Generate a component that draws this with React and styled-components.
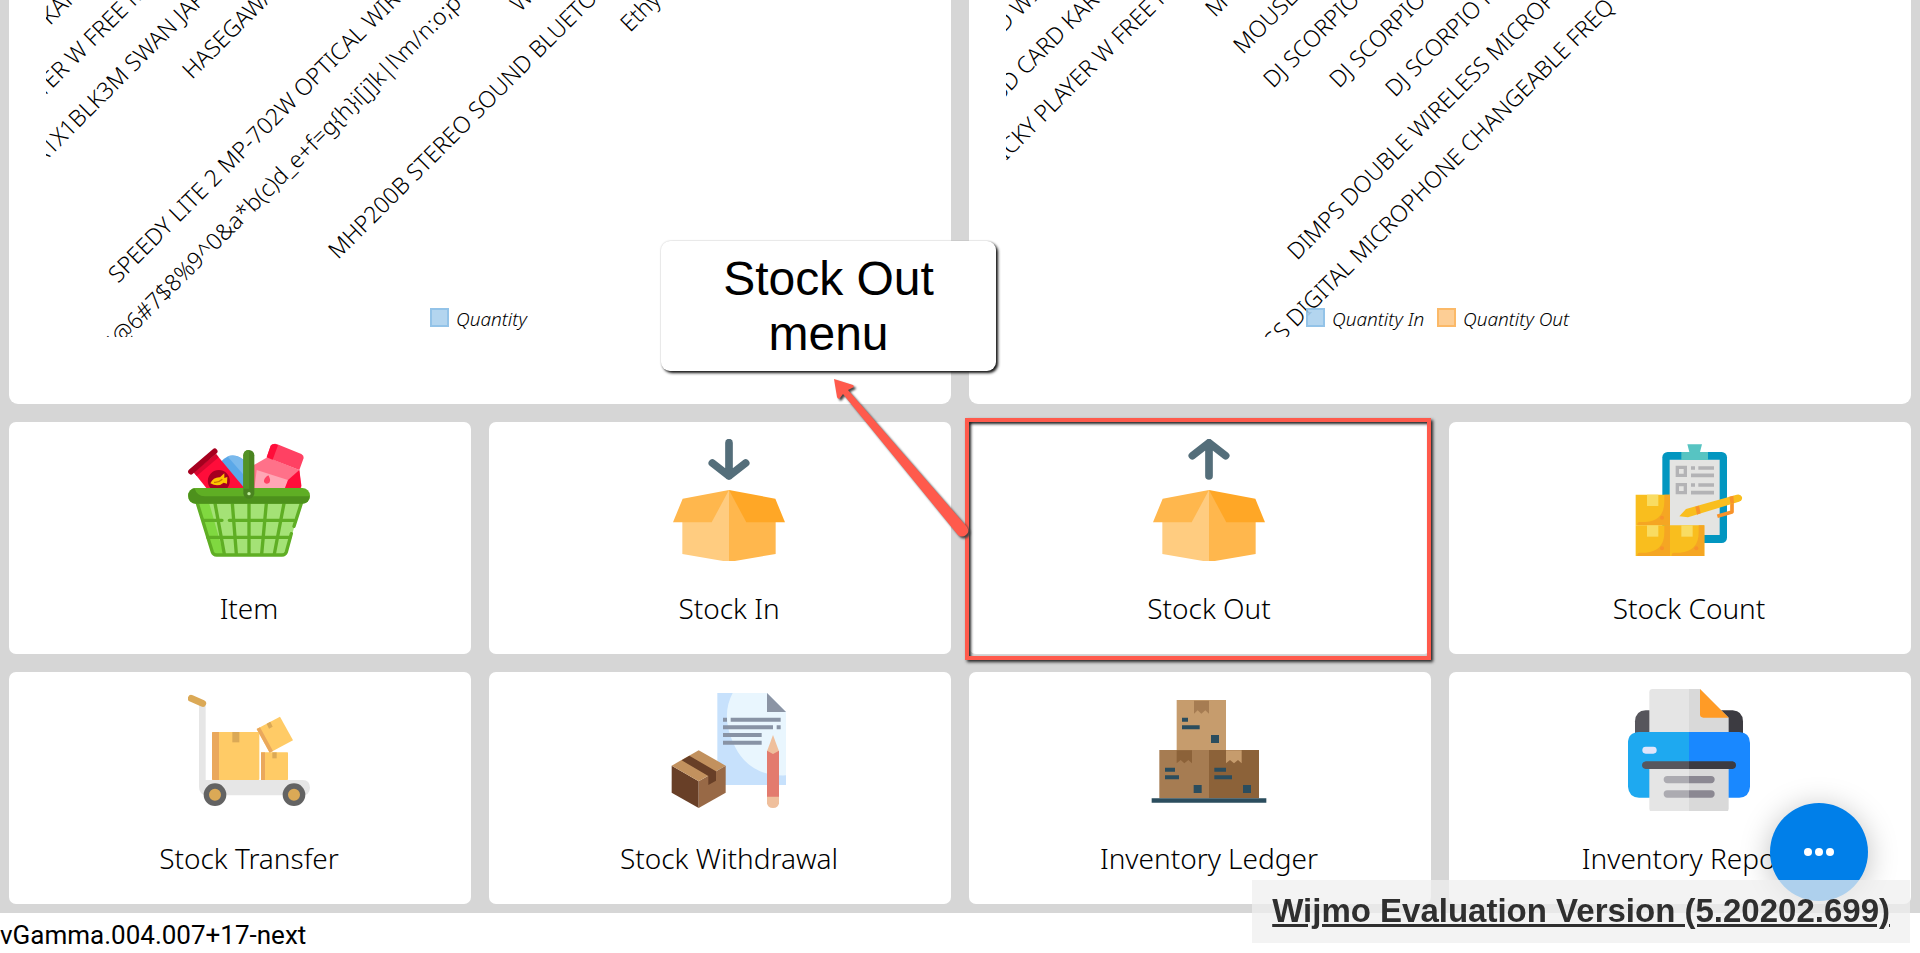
import React from "react";
import styled, { createGlobalStyle } from "styled-components";

const GlobalStyle = createGlobalStyle`
  * {
    box-sizing: border-box;
  }

  body {
    margin: 0;
    background: #fff;
    color: #000;
    font-family: "Noto Sans", "Open Sans", sans-serif;
    overflow: hidden;
  }
`;

const Dashboard = styled.main`
  display: flex;
  flex-direction: column;
  gap: 18px;
  padding: 0 9px 9px;
  background: #d6d6d6;
`;

const Charts = styled.div`
  display: grid;
  grid-template-columns: repeat(2, 1fr);
  gap: 18px;
`;

const ChartCard = styled.section`
  padding: 0 18px 67px 37px;
  background: #fff;
  border-radius: 0 0 9px 9px;
`;

const ChartSvg = styled.svg`
  display: block;
  width: 100%;
  height: 337px;
  overflow: hidden;
`;

const AxisLabel = styled.text`
  font-size: 23px;
  font-weight: 350;
`;

const LegendLabel = styled.text`
  font-size: 19px;
  font-style: italic;
  font-weight: 350;
`;

const Tiles = styled.nav`
  display: grid;
  grid-template-columns: repeat(4, 1fr);
  gap: 18px;
`;

const TileBox = styled.div`
  position: relative;
`;

const Tile = styled.a`
  display: flex;
  flex-direction: column;
  align-items: center;
  gap: 27px;
  padding: 17px 0 26px 18px;
  background: #fff;
  border-radius: 7px;
  color: #000;
  text-decoration: none;
`;

const TileIcon = styled.svg`
  width: 122px;
  height: 122px;
`;

const TileLabel = styled.span`
  font-size: 28px;
  font-weight: 350;
  line-height: 40px;
`;

const Highlight = styled.div`
  position: absolute;
  z-index: 2;
  inset: -4px 0 -6px -4px;
  border: 4px solid #ff5a4c;
  box-shadow: 2px 2px 3px #222, inset 2px 2px 3px #222;
  pointer-events: none;
`;

const Callout = styled.div`
  position: absolute;
  z-index: 2;
  left: -308px;
  bottom: 283px;
  width: 335px;
  padding: 10px 40px;
  background: #fff;
  border-radius: 9px;
  box-shadow: 2px 2px 3px #111, 0 0 2px #ccc;
  font-family: "Liberation Sans", Arial, sans-serif;
  font-size: 48px;
  line-height: 55px;
  text-align: center;
`;

const Arrow = styled.svg`
  position: absolute;
  z-index: 3;
  left: -144px;
  top: -48px;
  width: 150px;
  height: 170px;
  filter: drop-shadow(2px 2px 1px #444);
  pointer-events: none;
`;

const Version = styled.footer`
  padding-top: 4px;
  font-family: Roboto, sans-serif;
  font-size: 26px;
  line-height: 36px;
`;

const Fab = styled.button`
  position: fixed;
  z-index: 4;
  right: 52px;
  bottom: 52px;
  display: flex;
  align-items: center;
  justify-content: center;
  width: 98px;
  height: 98px;
  padding: 0;
  border: 0;
  border-radius: 50%;
  background: #007fe9;
  box-shadow: 0 4px 30px rgba(0, 0, 0, 0.25);
`;

const Banner = styled.div`
  position: fixed;
  z-index: 5;
  right: 10px;
  bottom: 10px;
  padding: 11px 20px 12px;
  background: rgba(239, 239, 239, 0.73);
  font-family: "Liberation Sans", Arial, sans-serif;
  font-size: 33px;
  font-weight: bold;
  line-height: 40px;
`;

const BannerLink = styled.a`
  color: #2f2f2f;
`;

const BLUE = { fill: "#abd1ee", stroke: "#88bde6" };
const ORANGE = { fill: "#fdc98a", stroke: "#fbb258" };

const stockLabels = [
  { x: 4, y: 26, text: "KAR" },
  { x: -3, y: 98, text: "YER W FREE M" },
  { x: -5, y: 166, text: "A1X1BLK3M SWAN JAP" },
  { x: 146, y: 80, text: "HASEGAWA" },
  { x: 72, y: 284, text: "SPEEDY LITE 2 MP-702W OPTICAL WIR" },
  { x: 62, y: 359, text: "!5@6#7$8%9^0&a*b(c)d_e+f=g{h}i[j]k|l\\m/n:o;p" },
  { x: 474, y: 13, text: "WI" },
  { x: 292, y: 260, text: "MHP200B STEREO SOUND BLUETO" },
  { x: 584, y: 33, text: "Ethyl" },
];

const movementLabels = [
  { x: -2, y: 33, text: "D WI" },
  { x: -5, y: 101, text: "SD CARD KAR" },
  { x: 0, y: 161, text: "ICKY PLAYER W FREE M" },
  { x: 209, y: 18, text: "MT" },
  { x: 237, y: 55, text: "MOUSE" },
  { x: 267, y: 89, text: "DJ SCORPIO" },
  { x: 333, y: 89, text: "DJ SCORPIO" },
  { x: 389, y: 98, text: "DJ SCORPIO M" },
  { x: 291, y: 261, text: "DIMPS DOUBLE WIRELESS MICROPH" },
  { x: 268, y: 350, text: "SS DIGITAL MICROPHONE CHANGEABLE FREQ" },
];

const stockLegend = [{ x: 384, color: BLUE, text: "Quantity" }];

const movementLegend = [
  { x: 300, color: BLUE, text: "Quantity In" },
  { x: 431, color: ORANGE, text: "Quantity Out" },
];

function Chart({ labels, legend }) {
  return (
    <ChartCard>
      <ChartSvg>
        {labels.map(({ x, y, text }) => (
          <AxisLabel key={x + text} transform={`translate(${x} ${y}) rotate(-45)`}>
            {text}
          </AxisLabel>
        ))}
        {legend.map(({ x, color, text }) => (
          <g key={text}>
            <rect
              x={x + 1}
              y="309"
              width="17"
              height="17"
              fill={color.fill}
              stroke={color.stroke}
              strokeWidth="2"
              opacity="0.9"
            />
            <LegendLabel x={x + 26} y="326">
              {text}
            </LegendLabel>
          </g>
        ))}
      </ChartSvg>
    </ChartCard>
  );
}

function ItemIcon() {
  return (
    <TileIcon viewBox="84 57 366 366">
      <path d="M184 124Q207 99 236 110L256 124V206H230Z" fill="#5ba8e8" />
      <path d="M202 109Q220 103 240 112L256 122V170Z" fill="#7ab9ec" />
      <path d="M101 157L168 102L256 208H142Z" fill="#ff0d3a" />
      <path d="M101 157L168 102L176 112L110 168Z" fill="#d90730" />
      <path d="M93 155L164 94" stroke="#a6001f" strokeWidth="17" strokeLinecap="round" />
      <path d="M153 206A33 33 0 1 1 200 206Z" fill="#a6001f" />
      <path
        d="M151 190Q160 171 180 172L193 160L193 174L202 171L201 191L191 188Q174 203 151 190Z"
        fill="#ffc400"
      />
      <path d="M162 187Q175 189 187 178" stroke="#c77900" strokeWidth="4" fill="none" />
      <path d="M280 136L322 112L418 150L424 206H280Z" fill="#ff7189" />
      <path d="M341 72Q346 70 352 73L424 102Q432 106 431 114L418 150L320 112L332 77Q335 72 341 72Z" fill="#ff4163" />
      <path d="M320 112L332 77Q336 71 345 72L354 76L338 119Z" fill="#ff0d3a" />
      <path d="M290 150L384 180L375 206H283Z" fill="#ffa6b5" />
      <path d="M418 150L424 196Q424 206 416 206H374L384 180Z" fill="#ff0d3a" />
      <path d="M325 166Q334 180 328 188Q318 195 312 186Q310 175 325 166Z" fill="#ff4163" />
      <path d="M110 248H424L381 396Q378 405 368 405H168Q158 405 155 396Z" fill="#a4e276" />
      <path d="M110 248H147L192 405H168Q158 405 155 396Z" fill="#80d840" />
      <g fill="none" stroke="#5fae24" strokeWidth="10" strokeLinecap="round">
        <path d="M112 250L157 396Q160 405 170 405H366Q376 405 379 396L394 341" />
        <path d="M424 250L402 319" />
        <path d="M165 250L193 402M217 250L229 402M267 250V402M319 250L305 402M372 250L343 402" />
        <path d="M130 301H186M208 301H402M143 352H390" />
      </g>
      <rect x="84" y="204" width="366" height="47" rx="23" fill="#5fae24" />
      <path d="M85 222Q91 207 104 205Q110 228 134 229H449Q448 251 426 251H108Q84 251 85 222Z" fill="#4d911c" />
      <rect x="250" y="90" width="33" height="146" rx="16" fill="#4a8420" />
      <path d="M250 106Q251 90 267 90V206H250Z" fill="#539326" />
      <circle cx="267" cy="221" r="5" fill="#c0efa0" />
    </TileIcon>
  );
}

function BoxIcon({ up }) {
  return (
    <TileIcon viewBox="84 57 366 366">
      <path
        d={up ? "M267 168V70M217 107L267 68L317 107" : "M267 68V168M217 129L267 168L317 129"}
        fill="none"
        stroke="#546e7a"
        strokeWidth="23"
        strokeLinecap="round"
        strokeLinejoin="round"
      />
      <path d="M127 300L267 210V426L127 402Z" fill="#ffcc80" />
      <path d="M267 210L407 300V402L267 426Z" fill="#ffb74d" />
      <path d="M267 210L128 236L99 307H215Z" fill="#ffb74d" />
      <path d="M267 210L406 236L435 307H319Z" fill="#ffa726" />
    </TileIcon>
  );
}

function Carton({ x, y }) {
  return (
    <g transform={`translate(${x} ${y})`}>
      <path d="M0 0H103V92H0Z" fill="#f9be1e" />
      <path d="M86 0H103V92H5V88Q5 82 12 82H30Q86 78 86 20Z" fill="#f5a623" />
      <path d="M34 0H68V34H34Z" fill="#f9dc62" />
      <circle cx="79" cy="69" r="6" fill="#f8932a" />
    </g>
  );
}

function CountIcon() {
  return (
    <TileIcon viewBox="84 57 366 366">
      <rect x="187" y="96" width="194" height="273" rx="16" fill="#0296c0" />
      <path d="M209 119H359V345H209Z" fill="#e4e4e2" />
      <path d="M244 120V96H268L262 73H306L300 96H324V120Z" fill="#57c4c2" />
      <g fill="none" stroke="#b3b3b5" strokeWidth="10">
        <path d="M232 142H256V166H232ZM232 194H256V218H232Z" />
        <path d="M273 144H285M295 144H342M273 166H342M273 195H285M295 195H342M273 218H342" strokeWidth="11" />
      </g>
      <path d="M352 289L396 276L396 232" fill="none" stroke="#f8932a" strokeWidth="11" strokeLinejoin="round" />
      <path d="M238 289L258 267L410 224Q422 221 426 231Q428 241 417 245L264 292Z" fill="#f9be1e" />
      <path d="M286 260L297 257L302 280L291 284ZM388 230L400 227L402 249L392 252Z" fill="#f8932a" />
      <Carton x={107} y={224} />
      <Carton x={107} y={316} />
      <Carton x={210} y={316} />
    </TileIcon>
  );
}

function TransferIcon() {
  return (
    <TileIcon viewBox="114 27 366 366">
      <path d="M147 75H167V300H458Q480 301 480 323Q479 346 456 346H170Q147 344 147 320Z" fill="#e6e6e6" />
      <path d="M124 55L158 70" stroke="#dba956" strokeWidth="21" strokeLinecap="round" />
      <rect x="186" y="156" width="142" height="144" rx="3" fill="#ffcb66" />
      <path d="M186 159Q186 156 189 156H207V300H189Q186 300 186 297Z" fill="#eaa85c" />
      <path d="M247 156H268V187H247Z" fill="#dba956" />
      <rect x="333" y="217" width="81" height="83" rx="2" fill="#ffcb66" />
      <path d="M333 217H345V300H333Z" fill="#eaa85c" />
      <path d="M367 217H380V235H367Z" fill="#dba956" />
      <path d="M320 147L390 110L429 181L359 218Z" fill="#ffcb66" />
      <path d="M320 147L330 142L369 213L359 218Z" fill="#eaa85c" />
      <path d="M350 131L361 125L368 140L357 146Z" fill="#dba956" />
      <g fill="#dba956" stroke="#636363" strokeWidth="16">
        <circle cx="195" cy="344" r="26" />
        <circle cx="432" cy="344" r="26" />
      </g>
    </TileIcon>
  );
}

function WithdrawalIcon() {
  return (
    <TileIcon viewBox="174 27 366 366">
      <path d="M322 39H471L528 96V315H322Z" fill="#c7e1fc" />
      <path d="M368 39H471L528 96V286Q420 290 375 200Q330 110 368 39Z" fill="#e9f6fe" />
      <path d="M471 39L528 96H471Z" fill="#8b94a4" />
      <path
        d="M339 119H351M362 119H512M339 142H489M500 142H512M339 165H455M339 188H455"
        stroke="#8893a5"
        strokeWidth="12"
      />
      <path d="M489 165L507 214V370Q505 384 489 384Q473 384 471 370V214Z" fill="#efbf9c" />
      <path d="M471 212L489 222L507 212V350H471Z" fill="#e37b6e" />
      <path d="M185 257L266 304V384L185 338Z" fill="#683f27" />
      <path d="M347 257L266 304V384L347 338Z" fill="#986946" />
      <path d="M266 211L347 257L266 304L185 257Z" fill="#c2915e" />
      <path d="M238 227L318 274V302L295 315V288L215 241Z" fill="#683f27" />
    </TileIcon>
  );
}

function LedgerIcon() {
  return (
    <TileIcon viewBox="174 27 366 366">
      <path d="M260 60H408V211H260Z" fill="#c69c6d" />
      <path d="M208 210H357V355H208Z" fill="#a67c52" />
      <path d="M357 210H507V355H357Z" fill="#8c6239" />
      <path d="M312 62H357V101L346 91L334 101L323 91L312 101Z" fill="#a67c52" />
      <path d="M260 211H306V250L295 240L283 250L272 240L260 250Z" fill="#8c6239" />
      <path d="M408 211H455V250L444 240L432 250L420 240L408 250Z" fill="#c69c6d" />
      <path
        d="M276 119H294M276 142H329M225 269H255M225 292H267M373 269H408M373 292H426"
        stroke="#2b4d5e"
        strokeWidth="12"
      />
      <path d="M363 165H387V189H363ZM311 315H335V339H311ZM459 315H483V339H459ZM185 355H529V368H185Z" fill="#2b4d5e" />
    </TileIcon>
  );
}

function PrinterIcon() {
  return (
    <TileIcon viewBox="204 57 366 366">
      <path d="M225 190V154Q227 122 257 121H387V190Z" fill="#57565c" />
      <path d="M387 121H518Q548 123 549 154V190H387Z" fill="#3c3b41" />
      <path d="M387 57H278Q268 57 268 67V190H387Z" fill="#e5e5e5" />
      <path d="M387 57H420L506 143V190H387Z" fill="#d9d9d9" />
      <path d="M420 57L506 143H430Q420 143 420 133Z" fill="#ff9b26" />
      <path d="M387 186H237Q204 188 204 219V350Q206 381 237 383H387Z" fill="#1ea9f0" />
      <path d="M387 186H538Q570 188 570 219V350Q568 381 538 383H387Z" fill="#1988ff" />
      <rect x="247" y="230" width="43" height="21" rx="10" fill="#e1e5fb" />
      <path d="M387 290H268V415Q268 426 278 426H387Z" fill="#e5e5e5" />
      <path d="M387 290H506V415Q506 426 496 426H387Z" fill="#d9d9d9" />
      <path d="M387 274H257Q246 276 246 285Q246 296 257 297H387Z" fill="#57565c" />
      <path d="M387 274H518Q528 276 528 285Q528 296 518 297H387Z" fill="#3c3b41" />
      <path d="M387 318H322Q311 319 311 328Q311 339 322 340H387ZM387 361H322Q311 362 311 371Q311 382 322 383H387Z" fill="#acabb1" />
      <path d="M387 318H453Q464 319 464 328Q464 339 453 340H387ZM387 361H453Q464 362 464 371Q464 382 453 383H387Z" fill="#8b8892" />
    </TileIcon>
  );
}

const tiles = [
  { label: "Item", icon: <ItemIcon /> },
  { label: "Stock In", icon: <BoxIcon /> },
  { label: "Stock Out", icon: <BoxIcon up />, annotated: true },
  { label: "Stock Count", icon: <CountIcon /> },
  { label: "Stock Transfer", icon: <TransferIcon /> },
  { label: "Stock Withdrawal", icon: <WithdrawalIcon /> },
  { label: "Inventory Ledger", icon: <LedgerIcon /> },
  { label: "Inventory Report", icon: <PrinterIcon /> },
];

function Annotation() {
  return (
    <>
      <Highlight />
      <Callout>Stock Out menu</Callout>
      <Arrow viewBox="0 0 150 170">
        <path
          d="M9 5L28 11Q30 13 27 14L23 16L142 153Q145 158 141 161Q137 164 133 161L18 20L15 24Q13 26 12 23Z"
          fill="#ff5a4c"
        />
      </Arrow>
    </>
  );
}

export default function App() {
  return (
    <>
      <GlobalStyle />
      <Dashboard>
        <Charts>
          <Chart labels={stockLabels} legend={stockLegend} />
          <Chart labels={movementLabels} legend={movementLegend} />
        </Charts>
        <Tiles>
          {tiles.map(({ label, icon, annotated }) => (
            <TileBox key={label}>
              <Tile href="#">
                {icon}
                <TileLabel>{label}</TileLabel>
              </Tile>
              {annotated && <Annotation />}
            </TileBox>
          ))}
        </Tiles>
      </Dashboard>
      <Version>vGamma.004.007+17-next</Version>
      <Fab aria-label="More actions">
        <svg width="30" height="10" viewBox="0 0 30 10" fill="#fff">
          <circle cx="4" cy="5" r="4" />
          <circle cx="15" cy="5" r="4" />
          <circle cx="26" cy="5" r="4" />
        </svg>
      </Fab>
      <Banner>
        <BannerLink href="#">Wijmo Evaluation Version (5.20202.699)</BannerLink>
      </Banner>
    </>
  );
}
